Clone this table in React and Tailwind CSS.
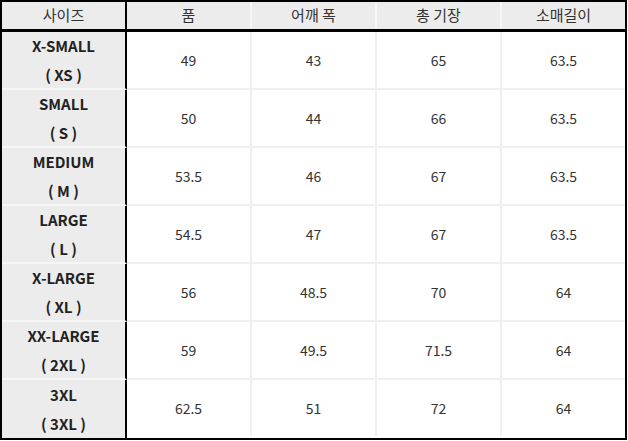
import React from 'react';

const HEADERS = ['사이즈', '품', '어깨 폭', '총 기장', '소매길이'];

const ROWS = [
  { name: 'X-SMALL', code: 'XS', values: ['49', '43', '65', '63.5'] },
  { name: 'SMALL', code: 'S', values: ['50', '44', '66', '63.5'] },
  { name: 'MEDIUM', code: 'M', values: ['53.5', '46', '67', '63.5'] },
  { name: 'LARGE', code: 'L', values: ['54.5', '47', '67', '63.5'] },
  { name: 'X-LARGE', code: 'XL', values: ['56', '48.5', '70', '64'] },
  { name: 'XX-LARGE', code: '2XL', values: ['59', '49.5', '71.5', '64'] },
  { name: '3XL', code: '3XL', values: ['62.5', '51', '72', '64'] },
];

const font = { fontFamily: '"Noto Sans CJK KR", "Noto Sans", sans-serif' };

const App = () => {
  return (
    <div className="w-[628px] h-[441px] bg-white" style={font}>
      <div className="w-[627px] border-2 border-black">
        {/* header row */}
        <div className="flex h-[30px] bg-[#ececec] border-b-[3px] border-black">
          {HEADERS.map((h, i) => (
            <div
              key={h}
              className={`flex items-center justify-center text-[15px] text-[#333] ${
                i === 0
                  ? 'w-[125px] border-r-2 border-black'
                  : i < 4
                  ? 'w-[125px] border-r-2 border-[#f7f7f7]'
                  : 'w-[123px]'
              }`}
            >
              {h}
            </div>
          ))}
        </div>

        {/* size rows */}
        {ROWS.map((row, r) => (
          <div key={row.name} className="flex">
            <div
              className={`w-[125px] h-[58px] flex flex-col items-center justify-center bg-[#ececec] border-r-2 border-black text-[15px] font-bold text-[#222] leading-[29px] ${
                r < ROWS.length - 1 ? 'border-b-2 border-b-[#f6f6f6]' : 'h-[56px]'
              }`}
            >
              <span>{row.name}</span>
              <span>( {row.code} )</span>
            </div>
            {row.values.map((v, i) => (
              <div
                key={i}
                className={`flex items-center justify-center text-[14px] text-[#333] ${
                  r < ROWS.length - 1 ? 'h-[58px] border-b-2 border-[#efefef]' : 'h-[56px]'
                } ${i < 3 ? 'w-[125px] border-r-2 border-r-[#efefef]' : 'w-[123px]'}`}
              >
                {v}
              </div>
            ))}
          </div>
        ))}
      </div>
    </div>
  );
};

export default App;
